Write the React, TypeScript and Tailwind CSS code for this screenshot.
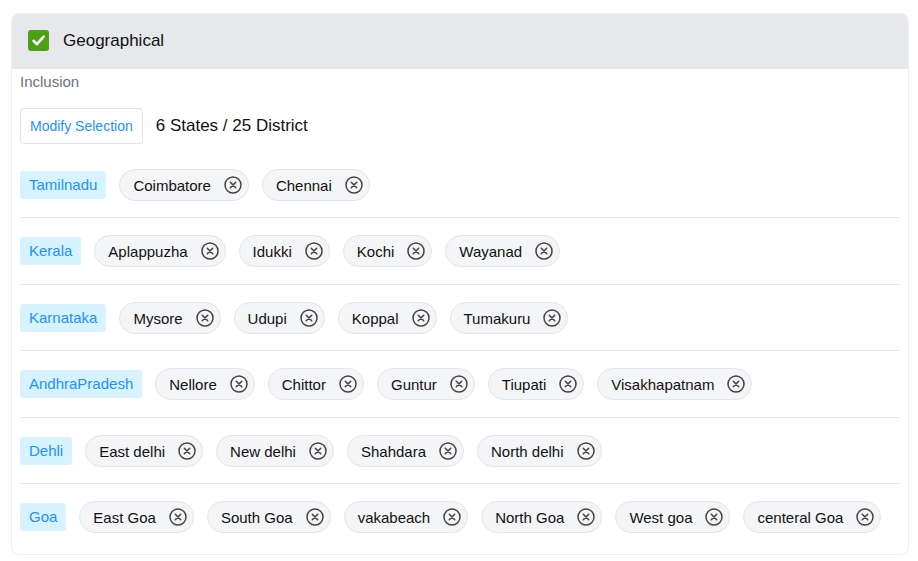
import React from "react";

const data: { state: string; districts: string[] }[] = [
  { state: "Tamilnadu", districts: ["Coimbatore", "Chennai"] },
  { state: "Kerala", districts: ["Aplappuzha", "Idukki", "Kochi", "Wayanad"] },
  { state: "Karnataka", districts: ["Mysore", "Udupi", "Koppal", "Tumakuru"] },
  { state: "AndhraPradesh", districts: ["Nellore", "Chittor", "Guntur", "Tiupati", "Visakhapatnam"] },
  { state: "Dehli", districts: ["East delhi", "New delhi", "Shahdara", "North delhi"] },
  { state: "Goa", districts: ["East Goa", "South Goa", "vakabeach", "North Goa", "West goa", "centeral Goa"] },
];

function CloseCircle() {
  return (
    <svg width="18" height="18" viewBox="0 0 18 18" fill="none">
      <circle cx="9" cy="9" r="8" stroke="#444" strokeWidth="1.5" />
      <path d="M6.3 6.3 L11.7 11.7 M11.7 6.3 L6.3 11.7" stroke="#444" strokeWidth="1.6" strokeLinecap="round" />
    </svg>
  );
}

function Chip({ label }: { label: string }) {
  return (
    <div className="flex h-[32px] items-center gap-[13px] rounded-full border border-[#e3e5e8] bg-[#f4f5f7] pl-[13px] pr-[6px]">
      <span className="text-[15px] leading-none text-[#111]">{label}</span>
      <CloseCircle />
    </div>
  );
}

export default function App() {
  return (
    <div
      className="min-h-[561px] bg-white pl-[11px] pr-[9px] pt-[13px]"
      style={{ fontFamily: '"Liberation Sans", Arial, sans-serif' }}
    >
      <div className="overflow-hidden rounded-[8px] border border-[#eceef1] bg-white">
        <div className="flex h-[55px] items-center gap-[14px] bg-[#e6e8eb] pb-[2px] pl-[16px]">
          <div className="flex h-[21px] w-[21px] items-center justify-center rounded-[3px] bg-[#4e9f15]">
            <svg width="15" height="15" viewBox="0 0 15 15" fill="none">
              <path d="M2.5 7.8 L6 11.2 L12.6 3.6" stroke="white" strokeWidth="2.6" strokeLinecap="round" strokeLinejoin="round" />
            </svg>
          </div>
          <span className="text-[17px] text-[#111]">Geographical</span>
        </div>
        <div className="px-[8px] pb-[5px] pt-[3px]">
          <div className="text-[15px] leading-[20px] text-[#6b7280]">Inclusion</div>
          <div className="mt-[16px] flex items-center gap-[13px]">
            <button className="h-[36px] rounded-[4px] border border-[#dfe2e6] bg-white px-[9px] text-[14px] text-[#1e90ff]">
              Modify Selection
            </button>
            <span className="text-[17px] text-[#111]">6 States / 25 District</span>
          </div>
          <div className="mt-[8px]">
            {data.map((row, i) => (
              <div
                key={row.state}
                className={
                  "flex items-center gap-[13px] pt-[17px] " +
                  (i === 1 || i === 3 ? "pb-[17px] " : "pb-[16px] ") +
                  (i < data.length - 1 ? "border-b border-[#e5e7eb]" : "")
                }
              >
                <div className="flex h-[28px] items-center rounded-[3px] bg-[#d6f3ff] px-[9px] text-[15px] text-[#1e90ff]">
                  {row.state}
                </div>
                {row.districts.map((d) => (
                  <Chip key={d} label={d} />
                ))}
              </div>
            ))}
          </div>
        </div>
      </div>
    </div>
  );
}
